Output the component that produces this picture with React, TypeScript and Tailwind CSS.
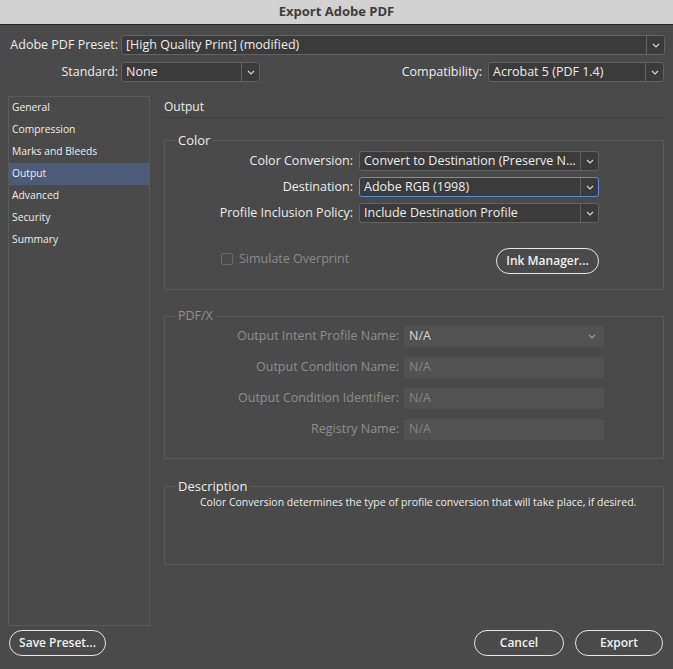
import React from 'react'

const font = { fontFamily: '"Open Sans", "DejaVu Sans", sans-serif' }

const Chevron = ({ color = '#d8d8d8' }: { color?: string }) => (
  <svg width="8" height="5" viewBox="0 0 8 5" fill="none">
    <path d="M1 1 L4 4 L7 1" stroke={color} strokeWidth="1.1" />
  </svg>
)

const Dropdown = ({ value, width, focused = false }: { value: string; width: string; focused?: boolean }) => (
  <div
    className={`flex h-[20px] items-stretch rounded-[3px] border bg-[#3b3b3b] ${width} ${
      focused ? 'border-[#5b8fe0]' : 'border-[#626262]'
    }`}
  >
    <div className="flex flex-1 items-center overflow-hidden whitespace-nowrap pl-[4px] text-[12.5px] text-[#ececec]">{value}</div>
    <div className="flex w-[18px] items-center justify-center border-l border-[#626262]">
      <Chevron />
    </div>
  </div>
)

const navItems = ['General', 'Compression', 'Marks and Bleeds', 'Output', 'Advanced', 'Security', 'Summary']

const colorRows = [
  { label: 'Color Conversion:', value: 'Convert to Destination (Preserve N...' },
  { label: 'Destination:', value: 'Adobe RGB (1998)', focused: true },
  { label: 'Profile Inclusion Policy:', value: 'Include Destination Profile' },
]

const pdfxRows = [
  { label: 'Output Intent Profile Name:', value: 'N/A', select: true },
  { label: 'Output Condition Name:', value: 'N/A' },
  { label: 'Output Condition Identifier:', value: 'N/A' },
  { label: 'Registry Name:', value: 'N/A' },
]

const PillButton = ({ children, className = '' }: { children: React.ReactNode; className?: string }) => (
  <button
    className={`flex h-[26px] items-center justify-center rounded-full border border-[#e6e6e6] text-[12px] font-semibold text-[#f0f0f0] ${className}`}
  >
    {children}
  </button>
)

export default function App() {
  return (
    <div className="flex h-[669px] w-[673px] flex-col overflow-hidden bg-[#4a4a4a] text-[12.5px] text-[#ececec]" style={font}>
      <div className="flex h-[25px] shrink-0 items-center justify-center border-b border-[#262626] bg-[#d1d1d1] text-[13px] font-bold text-[#3d3d3d]">
        Export Adobe PDF
      </div>

      <div className="mt-[10px] flex items-center">
        <div className="ml-[8px] w-[110px] text-right">Adobe PDF Preset:</div>
        <div className="ml-[3px]">
          <Dropdown value="[High Quality Print] (modified)" width="w-[544px]" />
        </div>
      </div>

      <div className="mt-[7px] flex items-center">
        <div className="ml-[8px] w-[110px] text-right">Standard:</div>
        <div className="ml-[3px]">
          <Dropdown value="None" width="w-[139px]" />
        </div>
        <div className="ml-auto mr-[6px]">Compatibility:</div>
        <div className="mr-[9px]">
          <Dropdown value="Acrobat 5 (PDF 1.4)" width="w-[176px]" />
        </div>
      </div>

      <div className="mt-[14px] flex h-[530px]">
        <div className="ml-[8px] w-[142px] border border-[#5a5a5a]">
          {navItems.map((item) => (
            <div
              key={item}
              className={`flex h-[22px] items-center pl-[3px] text-[10.3px] ${item === 'Output' ? 'bg-[#4d5b76]' : ''}`}
            >
              {item}
            </div>
          ))}
        </div>

        <div className="ml-[14px] flex w-[500px] flex-col">
          <div className="flex h-[22px] items-center border-b border-[#3e3e3e] pt-[1px] text-[12px]">Output</div>

          <fieldset className="mt-[14px] border border-[#5a5a5a] pb-[15px]">
            <legend className="ml-[10px] px-[3px] text-[13px] leading-[16px]">Color</legend>
            <div className="mt-[3px] flex flex-col gap-[6px]">
              {colorRows.map((row) => (
                <div key={row.label} className="flex items-center">
                  <div className="w-[188px] whitespace-nowrap text-right">{row.label}</div>
                  <div className="ml-[6px]">
                    <Dropdown value={row.value} width="w-[240px]" focused={row.focused} />
                  </div>
                </div>
              ))}
            </div>
            <div className="mt-[25px] flex items-center">
              <div className="mb-[4px] ml-[56px] flex items-center gap-[6px] text-[#8a8a8a]">
                <div className="h-[12px] w-[12px] rounded-[2px] border border-[#6a6a6a]" />
                <span>Simulate Overprint</span>
              </div>
              <PillButton className="ml-auto mr-[64px] w-[103px]">Ink Manager...</PillButton>
            </div>
          </fieldset>

          <fieldset className="mt-[18px] border border-[#5a5a5a] pb-[18px]">
            <legend className="ml-[10px] px-[3px] leading-[16px] text-[#8e8e8e]">PDF/X</legend>
            <div className="mt-[2px] flex flex-col gap-[10px]">
              {pdfxRows.map((row) => (
                <div key={row.label} className="flex items-center">
                  <div className="w-[234px] whitespace-nowrap text-right text-[#8e8e8e]">{row.label}</div>
                  <div
                    className={`ml-[5px] flex h-[21px] w-[200px] items-center rounded-[2px] bg-[#525252] pl-[5px] pr-[8px] ${
                      row.select ? 'text-[#d6d6d6]' : 'text-[#858585]'
                    }`}
                  >
                    <span className="flex-1">{row.value}</span>
                    {row.select && <Chevron color="#9a9a9a" />}
                  </div>
                </div>
              ))}
            </div>
          </fieldset>

          <fieldset className="mt-[19px] h-[87px] border border-[#5a5a5a]">
            <legend className="ml-[10px] px-[3px] text-[13px] leading-[16px]">Description</legend>
            <div className="ml-[35px] mt-[1px] text-[10.5px]">
              Color Conversion determines the type of profile conversion that will take place, if desired.
            </div>
          </fieldset>
        </div>
      </div>

      <div className="mt-[4px] flex items-center">
        <PillButton className="ml-[9px] w-[97px]">Save Preset...</PillButton>
        <PillButton className="ml-auto w-[90px]">Cancel</PillButton>
        <PillButton className="ml-[11px] mr-[10px] w-[88px]">Export</PillButton>
      </div>
    </div>
  )
}
